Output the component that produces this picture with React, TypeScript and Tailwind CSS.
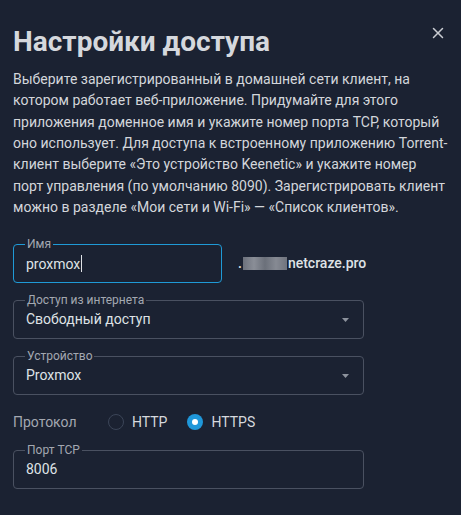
import { X } from 'lucide-react';

function Field({
  label,
  value,
  focused,
  select,
  className,
}: {
  label: string;
  value: string;
  focused?: boolean;
  select?: boolean;
  className?: string;
}) {
  return (
    <div
      className={`relative h-[39px] rounded-[4px] border ${
        focused ? 'border-[#1f9ad6]' : 'border-[#4a5161]'
      } ${className ?? ''}`}
    >
      <span className="absolute -top-[9px] left-[11px] bg-[#1b2232] px-[2px] text-[12px] leading-[16px] text-[#a3a8b1]">
        {label}
      </span>
      <div className="flex h-full items-center pl-[12px] pr-[14px] text-[14px] text-[#dfe2e6]">
        <span className="flex-1">
          {value}
          {focused && <span className="ml-[1px] inline-block h-[17px] w-px translate-y-[3px] bg-[#dfe2e6]" />}
        </span>
        {select && (
          <svg width="7" height="4" viewBox="0 0 7 4">
            <path d="M0 0h7L3.5 4z" fill="#8d939d" />
          </svg>
        )}
      </div>
    </div>
  );
}

function Radio({ checked, label }: { checked?: boolean; label: string }) {
  return (
    <label className="flex items-center gap-[8px]">
      {checked ? (
        <span className="flex size-[16px] items-center justify-center rounded-full bg-[#1f97d9]">
          <span className="size-[6px] rounded-full bg-white" />
        </span>
      ) : (
        <span className="size-[16px] rounded-full border border-[#3b4558]" />
      )}
      <span className="text-[14px] text-[#d6d9de]">{label}</span>
    </label>
  );
}

export default function App() {
  return (
    <div className="relative h-[515px] w-[461px] overflow-hidden bg-[#1b2232] px-[13px] pt-[24px] font-[Roboto,'Noto_Sans',sans-serif]">
      <button className="absolute right-[14px] top-[24px] text-[#c9ccd2]">
        <X size={18} strokeWidth={2} />
      </button>

      <h2 className="text-[28px] font-bold leading-[36px] text-[#d5d8dd]">Настройки доступа</h2>

      <p className="mt-[9px] whitespace-nowrap text-[14px] leading-[21.33px] text-[#d3d6db]">
        Выберите зарегистрированный в домашней сети клиент, на
        <br />
        котором работает веб-приложение. Придумайте для этого
        <br />
        приложения доменное имя и укажите номер порта TCP, который
        <br />
        оно использует. Для доступа к встроенному приложению Torrent-
        <br />
        клиент выберите «Это устройство Keenetic» и укажите номер
        <br />
        порт управления (по умолчанию 8090). Зарегистрировать клиент
        <br />
        можно в разделе «Мои сети и Wi-Fi» — «Список клиентов».
      </p>

      <div className="mt-[26px] flex items-center">
        <Field label="Имя" value="proxmox" focused className="w-[209px]" />
        <div className="ml-[16px] flex items-center text-[14px] font-medium text-[#dfe2e6]">
          <span>.</span>
          <span className="mx-[1px] h-[13px] w-[44px] bg-[linear-gradient(90deg,#6c717c,#8a8e97,#6b707a,#868a93,#70747e)]" />
          <span>netcraze.pro</span>
        </div>
      </div>

      <Field label="Доступ из интернета" value="Свободный доступ" select className="mt-[17px] w-[351px]" />
      <Field label="Устройство" value="Proxmox" select className="mt-[17px] w-[351px]" />

      <div className="mt-[17px] flex h-[20px] items-center">
        <span className="w-[95px] text-[14px] text-[#a3a8b1]">Протокол</span>
        <div className="flex items-center gap-[20px]">
          <Radio label="HTTP" />
          <Radio label="HTTPS" checked />
        </div>
      </div>

      <Field label="Порт TCP" value="8006" className="mt-[18px] w-[351px]" />
    </div>
  );
}
